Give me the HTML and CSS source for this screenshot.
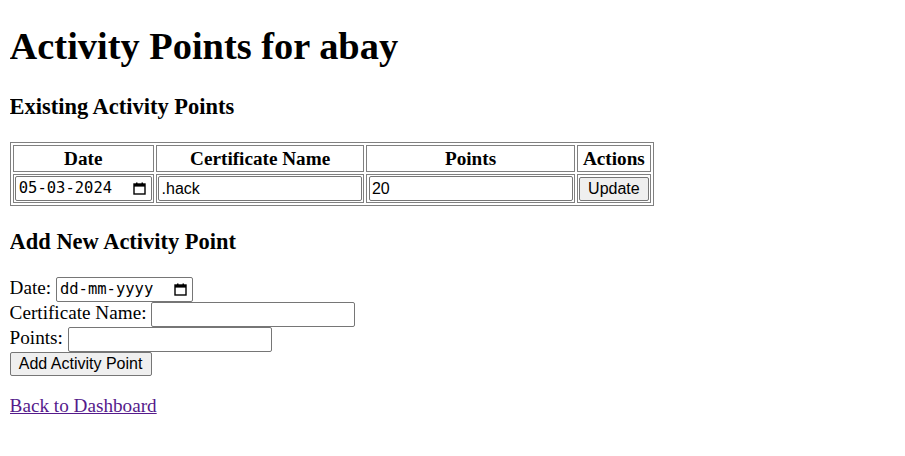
FILE: index.html
```html
<!DOCTYPE html>
<html>
<head>
<meta charset="utf-8">
<title>Activity Points</title>
<link rel="stylesheet" href="styles.css">
</head>
<body class="page">
<h1 class="title">Activity Points for abay</h1>
<h3 class="section">Existing Activity Points</h3>
<table class="points-table">
  <thead>
    <tr>
      <th class="cell">Date</th>
      <th class="cell">Certificate Name</th>
      <th class="cell">Points</th>
      <th class="cell">Actions</th>
    </tr>
  </thead>
  <tbody>
    <tr>
      <td class="cell">
        <span class="date-field"><span class="date-text">05-03-2024</span><svg class="cal" width="13" height="13" viewBox="0 0 13 13"><path d="M3 0.5h1.5v2H3zM8.5 0.5H10v2H8.5z" fill="#000"/><rect x="1" y="2" width="11" height="10" fill="none" stroke="#000" stroke-width="1.4"/><rect x="1" y="2" width="11" height="2.6" fill="#000"/></svg></span>
      </td>
      <td class="cell"><input class="field" type="text" value=".hack"></td>
      <td class="cell"><input class="field" type="text" value="20"></td>
      <td class="cell"><button class="btn" type="button">Update</button></td>
    </tr>
  </tbody>
</table>
<h3 class="section">Add New Activity Point</h3>
<form class="add-form">
  <label class="label">Date:</label> <span class="date-field"><span class="date-text">dd-mm-yyyy</span><svg class="cal" width="13" height="13" viewBox="0 0 13 13"><path d="M3 0.5h1.5v2H3zM8.5 0.5H10v2H8.5z" fill="#000"/><rect x="1" y="2" width="11" height="10" fill="none" stroke="#000" stroke-width="1.4"/><rect x="1" y="2" width="11" height="2.6" fill="#000"/></svg></span><br>
  <label class="label">Certificate Name:</label> <input class="field" type="text"><br>
  <label class="label">Points:</label> <input class="field" type="text"><br>
  <button class="btn" type="button">Add Activity Point</button>
</form>
<p class="back"><a class="back-link" href="#">Back to Dashboard</a></p>
</body>
</html>
```
FILE: styles.css
```css
.page {
  margin: 9.6px;
  font-family: "Liberation Serif", "Times New Roman", serif;
  font-size: 19.2px;
  color: #000;
  background: #fff;
}
.title {
  font-size: 38.4px;
  font-weight: bold;
  margin: 14.7px 0 25.7px;
}
.section {
  font-size: 22.46px;
  font-weight: bold;
  margin: 22.46px 0;
}
.points-table {
  border: 1px solid #808080;
  border-spacing: 2.4px;
  border-collapse: separate;
}
.cell {
  border: 1px solid #808080;
  padding: 1.2px;
  vertical-align: middle;
}
th.cell {
  font-weight: bold;
  text-align: center;
}
.field {
  font-family: "Liberation Sans", Arial, sans-serif;
  font-size: 16px;
  border: 1px solid #767676;
  border-radius: 2px;
  padding: 1px 2.4px;
  background: #fff;
  color: #000;
  box-sizing: border-box;
  width: 204px;
  height: 25px;
  margin: 0;
  vertical-align: middle;
}
.date-field {
  display: inline-flex;
  align-items: center;
  justify-content: space-between;
  box-sizing: border-box;
  width: 137px;
  height: 25px;
  border: 1px solid #767676;
  border-radius: 2px;
  padding: 0 5px 0 3px;
  background: #fff;
  vertical-align: middle;
}
.date-text {
  font-family: "DejaVu Sans Mono", "Liberation Mono", monospace;
  font-size: 15.5px;
  color: #000;
  line-height: 1;
}
.cal {
  display: block;
  flex: none;
}
.btn {
  font-family: "Liberation Sans", Arial, sans-serif;
  font-size: 16px;
  background: #efefef;
  border: 1px solid #767676;
  border-radius: 2px;
  padding: 1.2px 8.2px;
  color: #000;
  margin: 0;
  height: 24px;
  box-sizing: border-box;
  vertical-align: middle;
}
.add-form {
  margin: 0;
  line-height: 20px;
}
.back {
  margin: 19.2px 0;
}
.back-link {
  color: #551a8b;
  text-decoration: underline;
}
```
